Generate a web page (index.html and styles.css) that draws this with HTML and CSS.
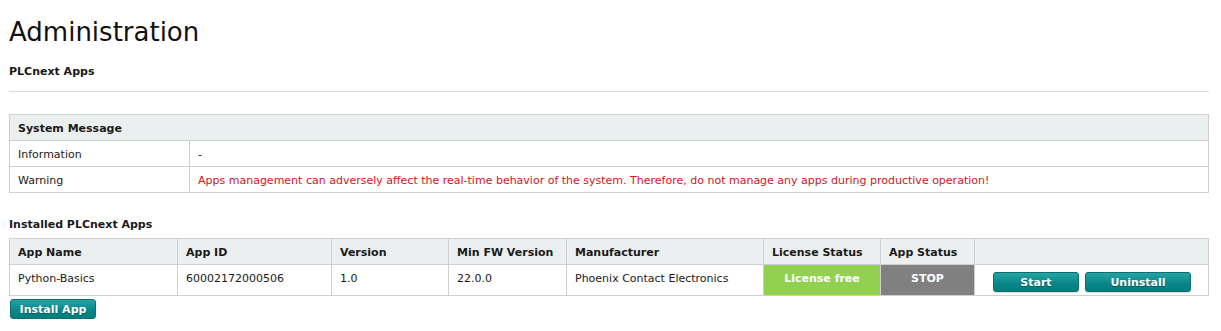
FILE: index.html
```html
<!DOCTYPE html>
<html>
<head>
<meta charset="utf-8">
<link rel="stylesheet" href="styles.css">
</head>
<body>
<div class="page">
  <h1 class="title">Administration</h1>
  <div class="subtitle">PLCnext Apps</div>
  <hr class="rule">
  <table class="grid sysmsg">
    <thead>
      <tr><th colspan="2">System Message</th></tr>
    </thead>
    <tbody>
      <tr><td class="label">Information</td><td>-</td></tr>
      <tr><td class="label">Warning</td><td class="warn">Apps management can adversely affect the real-time behavior of the system. Therefore, do not manage any apps during productive operation!</td></tr>
    </tbody>
  </table>
  <div class="section">Installed PLCnext Apps</div>
  <table class="grid apps">
    <thead>
      <tr>
        <th class="c1">App Name</th>
        <th class="c2">App ID</th>
        <th class="c3">Version</th>
        <th class="c4">Min FW Version</th>
        <th class="c5">Manufacturer</th>
        <th class="c6">License Status</th>
        <th class="c7">App Status</th>
        <th class="c8"></th>
      </tr>
    </thead>
    <tbody>
      <tr>
        <td>Python-Basics</td>
        <td>60002172000506</td>
        <td>1.0</td>
        <td>22.0.0</td>
        <td>Phoenix Contact Electronics</td>
        <td class="lic">License free</td>
        <td class="stat">STOP</td>
        <td class="actions"><div class="btns"><button class="btn wide">Start</button><button class="btn wider">Uninstall</button></div></td>
      </tr>
    </tbody>
  </table>
  <button class="btn install">Install App</button>
</div>
</body>
</html>
```
FILE: styles.css
```css
html, body { margin: 0; padding: 0; background: #fff; }
body {
  font-family: "DejaVu Sans", Verdana, sans-serif;
  font-size: 11px;
  color: #1a1a1a;
}
.page { padding: 0 12px 0 9px; }
.title {
  margin: 0;
  padding-top: 16px;
  font-weight: normal;
  font-size: 26px;
  line-height: 32px;
  color: #111;
}
.subtitle {
  margin-top: 17px;
  font-weight: bold;
  font-size: 11px;
  line-height: 14px;
}
.rule {
  margin: 12px 0 0 0;
  border: 0;
  border-top: 1px solid #dcdcdc;
}
.grid {
  width: 100%;
  border-collapse: collapse;
  border: 1px solid #cfcfcf;
}
.grid th, .grid td {
  border: 1px solid #cfcfcf;
  text-align: left;
  padding: 0 8px;
  font-size: 11px;
}
.grid th {
  background: #ecefef;
  font-weight: bold;
  padding-top: 2px;
  height: 23px;
}
.grid td { height: 23px; padding-top: 2px; }
.sysmsg { margin-top: 22px; }
.sysmsg .label { width: 163px; }
.warn { color: #d3131a; }
.section {
  margin-top: 25px;
  font-weight: bold;
  line-height: 14px;
}
.apps { margin-top: 6px; }
.grid.apps td {
  vertical-align: top;
  padding-top: 7px;
  height: 23px;
  line-height: 13px;
}
.c1 { width: 151px; }
.c2 { width: 137px; }
.c3 { width: 100px; }
.c4 { width: 101px; }
.c5 { width: 180px; }
.c6 { width: 100px; }
.c7 { width: 77px; }
.grid.apps td.lic {
  background: #92d050;
  color: #fff;
  font-weight: bold;
  text-align: center;
  padding-top: 7px;
}
.grid.apps td.stat {
  background: #808080;
  color: #fff;
  font-weight: bold;
  text-align: center;
  padding-top: 7px;
}
.grid.apps td.actions { padding: 7px 0 0 18px; height: 23px; }
.btns { display: flex; gap: 6px; }
.btn {
  display: block;
  border: 1px solid #0b6e70;
  border-radius: 3px;
  background: linear-gradient(#26a3a5, #078688 60%, #057d7f);
  color: #fff;
  font-family: "DejaVu Sans", Verdana, sans-serif;
  font-weight: bold;
  font-size: 11px;
  text-shadow: 0 1px 1px rgba(0,0,0,0.35);
  height: 20px;
  padding: 0;
  box-shadow: 0 1px 1px rgba(0,0,0,0.15);
}
.wide { width: 86px; }
.wider { width: 106px; }
.install { margin-top: 3px; margin-left: 1px; width: 86px; height: 20px; }
```
